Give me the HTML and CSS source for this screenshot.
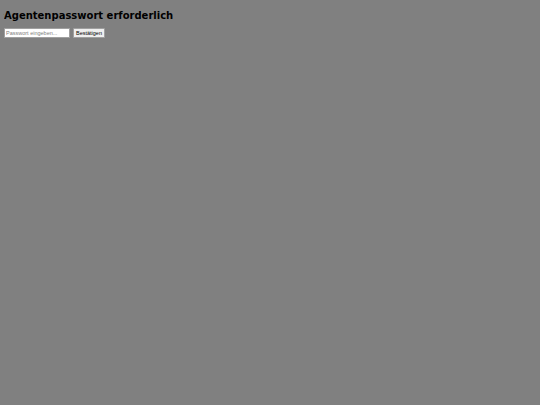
FILE: index.html
```html
<!DOCTYPE html>
<html lang="de">
<head>
    <meta charset="UTF-8">
    <title>Agentenpasswort</title>
    <link rel="stylesheet" href="styles.css">
</head>
<body>
    <!-- Passwort-Abfrage -->
    <div class="gate">
        <h1>Agentenpasswort erforderlich</h1>
        <form class="gate-form">
            <input type="password" class="gate-input" placeholder="Passwort eingeben...">
            <button type="button" class="gate-button">Bestätigen</button>
        </form>
    </div>
</body>
</html>
```

FILE: styles.css
```css
body {
    margin: 4px;
    background-color: #808080;
    font-family: "DejaVu Sans", sans-serif;
}
.gate h1 {
    margin: 6px 0 7px;
    font-size: 10px;
    font-weight: bold;
    color: #000;
}
.gate-form {
    display: flex;
    align-items: center;
    gap: 3px;
}
.gate-input {
    width: 66px;
    height: 10px;
    box-sizing: border-box;
    padding: 0 1px;
    border: 1px solid #a0a0a0;
    background: #fff;
    font-size: 5.5px;
    font-family: "Liberation Sans", sans-serif;
}
.gate-input::placeholder {
    color: #808080;
}
.gate-button {
    height: 10px;
    box-sizing: border-box;
    padding: 0 2px;
    border: 1px solid #a0a0a0;
    border-radius: 1px;
    background: #efefef;
    font-size: 5.5px;
    font-family: "Liberation Sans", sans-serif;
    color: #000;
}
```
